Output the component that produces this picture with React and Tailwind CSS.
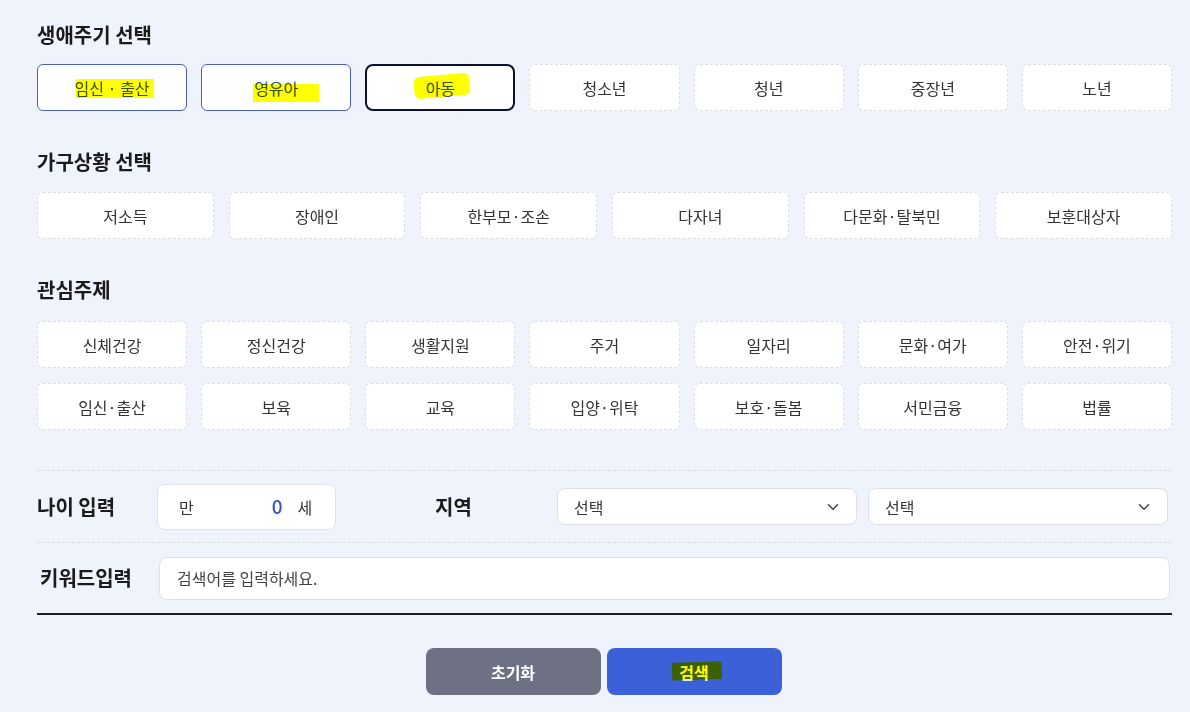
import { ChevronDown } from 'lucide-react';

// Search filter panel — life cycle / household / topic chips, age + region + keyword, actions.
const FONT = "font-['Noto_Sans_CJK_KR','Noto_Sans',sans-serif]";

const lifeCycle = [
    { label: '임신 · 출산', state: 'sel', mark: 'left-[38px] top-[14px] w-[78px] h-[19px]' },
    { label: '영유아', state: 'sel', mark: 'left-[51px] top-[19px] w-[66px] h-[18px]' },
    { label: '아동', state: 'active', mark: 'left-[47px] top-[9px] w-[56px] h-[22px] -rotate-[5deg] rounded-[6px]' },
    { label: '청소년' },
    { label: '청년' },
    { label: '중장년' },
    { label: '노년' },
];

const household = ['저소득', '장애인', '한부모·조손', '다자녀', '다문화·탈북민', '보훈대상자'];

const topics = [
    '신체건강', '정신건강', '생활지원', '주거', '일자리', '문화·여가', '안전·위기',
    '임신·출산', '보육', '교육', '입양·위탁', '보호·돌봄', '서민금융', '법률',
];

function Chip({ label, state, mark }) {
    const base = 'relative h-[47px] rounded-[6px] bg-white flex items-center justify-center text-[16px]';
    const look =
        state === 'sel'
            ? 'border border-[#4a5fc1] text-[#3450b8]'
            : state === 'active'
            ? 'border-[2.5px] rounded-[8px] border-[#0d1030] text-[#3450b8]'
            : 'border border-dashed border-[#dcdde3] text-[#333333]';
    return (
        <button className={`${base} ${look}`}>
            <span>{label}</span>
            {mark && <span className={`absolute bg-[#ffff00] mix-blend-multiply ${mark}`} />}
        </button>
    );
}

function Title({ children, className }) {
    return <h2 className={`text-[20px] font-bold text-[#1b1b1b] leading-[26px] ${className}`}>{children}</h2>;
}

function Select() {
    return (
        <div className="w-[300px] h-[37px] bg-white border border-[#e0e0e4] rounded-[8px] flex items-center justify-between pl-[16px] pr-[14px]">
            <span className="text-[16px] text-[#333333]">선택</span>
            <ChevronDown size={18} strokeWidth={2} className="text-[#444444]" />
        </div>
    );
}

export default function App() {
    return (
        <div className={`${FONT} min-h-[712px] w-[1190px] bg-[#eff3fb] pl-[37px] pr-[18px] pt-[22px]`}>
            {/* ── 생애주기 ─────────────────────────── */}
            <Title>생애주기 선택</Title>
            <div className="grid grid-cols-7 gap-x-[14px] mt-[16px]">
                {lifeCycle.map(c => <Chip key={c.label} {...c} />)}
            </div>

            {/* ── 가구상황 ─────────────────────────── */}
            <Title className="mt-[38px]">가구상황 선택</Title>
            <div className="grid grid-cols-6 gap-x-[15px] mt-[17px]">
                {household.map(l => <Chip key={l} label={l} />)}
            </div>

            {/* ── 관심주제 ─────────────────────────── */}
            <Title className="mt-[38px]">관심주제</Title>
            <div className="grid grid-cols-7 gap-x-[14px] gap-y-[15px] mt-[18px]">
                {topics.map(l => <Chip key={l} label={l} />)}
            </div>

            {/* ── 나이 / 지역 ─────────────────────── */}
            <div className="mt-[40px] border-t border-dashed border-[#d8dbe6] h-[72px] flex items-center">
                <span className="w-[120px] text-[20px] font-bold text-[#1b1b1b]">나이 입력</span>
                <div className="w-[179px] h-[46px] bg-white border border-[#e2e3e8] rounded-[8px] flex items-center pl-[21px] text-[16px] text-[#333333]">
                    <span>만</span>
                    <span className="ml-[78px] text-[#3b55c4] text-[19px] font-medium">0</span>
                    <span className="ml-[15px]">세</span>
                </div>
                <span className="ml-[99px] w-[122px] text-[20px] font-bold text-[#1b1b1b]">지역</span>
                <div className="flex gap-[11px]">
                    <Select />
                    <Select />
                </div>
            </div>

            {/* ── 키워드 ───────────────────────────── */}
            <div className="border-t border-dashed border-[#d8dbe6] h-[71px] flex items-center">
                <span className="w-[122px] pl-[3px] text-[20px] font-bold text-[#1b1b1b]">키워드입력</span>
                <div className="flex-1 mr-[2px] h-[43px] bg-white border border-[#e0e0e4] rounded-[8px] flex items-center pl-[17px] text-[16px] text-[#444444]">
                    검색어를 입력하세요.
                </div>
            </div>
            <div className="h-[2px] bg-[#1e1e1e]" />

            {/* ── Actions ───────────────────────────── */}
            <div className="flex justify-center gap-[6px] mt-[33px] pr-[2px]">
                <button className="w-[175px] h-[47px] rounded-[8px] bg-[#6e7184] text-white text-[16px] font-bold">초기화</button>
                <button className="relative w-[175px] h-[47px] rounded-[8px] bg-[#3b60d8] text-white text-[16px] font-bold">
                    <span>검색</span>
                    <span className="absolute left-[65px] top-[14px] w-[50px] h-[18px] -rotate-[2deg] bg-[#ffff00] mix-blend-multiply" />
                </button>
            </div>
        </div>
    );
}
